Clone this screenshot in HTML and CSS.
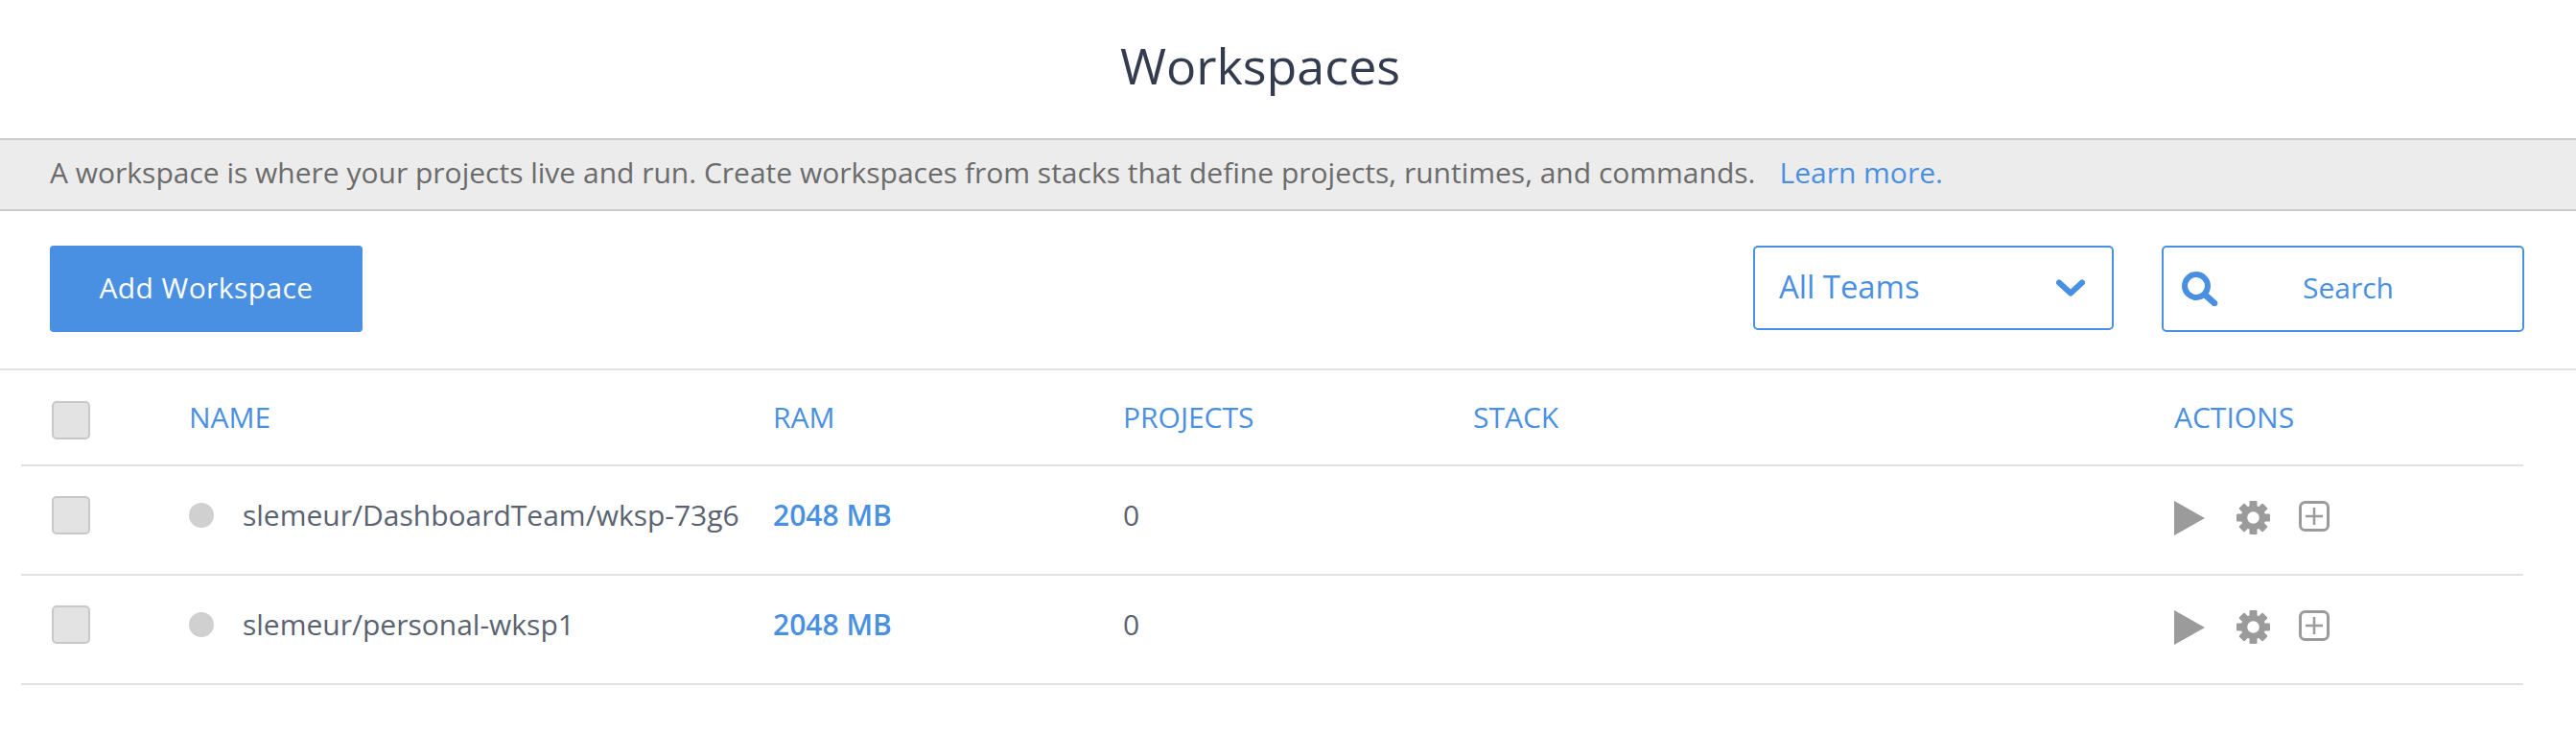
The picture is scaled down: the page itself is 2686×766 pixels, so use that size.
FILE: index.html
```html
<!DOCTYPE html>
<html lang="en">
<head>
    <meta charset="UTF-8">
    <title>Workspaces</title>
    <link rel="stylesheet" href="styles.css">
</head>
<body>
    <h1 class="page-title">Workspaces</h1>

    <div class="info-bar">
        <span>A workspace is where your projects live and run. Create workspaces from stacks that define projects, runtimes, and commands.</span>
        <a class="learn-more" href="#">Learn more.</a>
    </div>

    <div class="toolbar">
        <button class="add-btn">Add Workspace</button>
        <div class="toolbar-right">
            <div class="team-select">
                <span>All Teams</span>
                <svg class="chevron" width="30" height="18" viewBox="0 0 30 18"><path d="M3 3.5 15 14.5 27 3.5" fill="none" stroke="#4a90e2" stroke-width="6" stroke-linecap="round" stroke-linejoin="round"/></svg>
            </div>
            <div class="search-box">
                <svg class="search-icon" width="38" height="36" viewBox="0 0 38 36"><circle cx="15" cy="15" r="12" fill="none" stroke="#4a90e2" stroke-width="6"/><path d="M24 24 34 33" stroke="#4a90e2" stroke-width="6.5" stroke-linecap="round"/></svg>
                <span>Search</span>
            </div>
        </div>
    </div>

    <div class="list">
        <div class="row head-row">
            <div class="checkbox"></div>
            <div>NAME</div>
            <div>RAM</div>
            <div>PROJECTS</div>
            <div>STACK</div>
            <div>ACTIONS</div>
        </div>

        <div class="row item-row">
            <div class="checkbox"></div>
            <div class="name"><span class="dot"></span>slemeur/DashboardTeam/wksp-73g6</div>
            <div class="ram">2048 MB</div>
            <div>0</div>
            <div></div>
            <div class="actions">
                <svg width="32" height="36" viewBox="0 0 32 36"><path d="M0 0 32 18 0 36Z" fill="#9b9b9b"/></svg>
                <svg width="35" height="35" viewBox="0 0 35 35"><use href="#cog"/></svg>
                <svg class="add-icon" width="32" height="32" viewBox="0 0 32 32"><rect x="1.5" y="1.5" width="29" height="29" rx="5" fill="none" stroke="#9b9b9b" stroke-width="3"/><path d="M16 7V25M7 16H25" stroke="#9b9b9b" stroke-width="2.5"/></svg>
            </div>
        </div>

        <div class="row item-row">
            <div class="checkbox"></div>
            <div class="name"><span class="dot"></span>slemeur/personal-wksp1</div>
            <div class="ram">2048 MB</div>
            <div>0</div>
            <div></div>
            <div class="actions">
                <svg width="32" height="36" viewBox="0 0 32 36"><path d="M0 0 32 18 0 36Z" fill="#9b9b9b"/></svg>
                <svg width="35" height="35" viewBox="0 0 35 35"><use href="#cog"/></svg>
                <svg class="add-icon" width="32" height="32" viewBox="0 0 32 32"><rect x="1.5" y="1.5" width="29" height="29" rx="5" fill="none" stroke="#9b9b9b" stroke-width="3"/><path d="M16 7V25M7 16H25" stroke="#9b9b9b" stroke-width="2.5"/></svg>
            </div>
        </div>
    </div>

    <!-- shared gear icon -->
    <svg class="defs" width="0" height="0">
        <defs>
            <g id="cog" fill="#9b9b9b">
                <circle cx="17.5" cy="17.5" r="9.5" fill="none" stroke="#9b9b9b" stroke-width="6.5"/>
                <rect x="13.5" y="0" width="8" height="8" rx="1"/>
                <rect x="13.5" y="0" width="8" height="8" rx="1" transform="rotate(45 17.5 17.5)"/>
                <rect x="13.5" y="0" width="8" height="8" rx="1" transform="rotate(90 17.5 17.5)"/>
                <rect x="13.5" y="0" width="8" height="8" rx="1" transform="rotate(135 17.5 17.5)"/>
                <rect x="13.5" y="0" width="8" height="8" rx="1" transform="rotate(180 17.5 17.5)"/>
                <rect x="13.5" y="0" width="8" height="8" rx="1" transform="rotate(225 17.5 17.5)"/>
                <rect x="13.5" y="0" width="8" height="8" rx="1" transform="rotate(270 17.5 17.5)"/>
                <rect x="13.5" y="0" width="8" height="8" rx="1" transform="rotate(315 17.5 17.5)"/>
            </g>
        </defs>
    </svg>
</body>
</html>
```

FILE: styles.css
```css
body {
    font-family: "Open Sans", sans-serif;
    background-color: #fff;
    margin: 0;
    padding: 0;
    overflow: hidden;
}
.page-title {
    height: 144px;
    box-sizing: border-box;
    margin: 0;
    padding: 0 58px 10px 0;
    display: flex;
    align-items: center;
    justify-content: center;
    font-size: 52px;
    font-weight: 400;
    color: #333c4f;
}
.info-bar {
    height: 76px;
    box-sizing: border-box;
    display: flex;
    align-items: center;
    padding: 0 0 6px 52px;
    background-color: #ececec;
    border-top: 2px solid #ccc;
    border-bottom: 2px solid #ccc;
    font-size: 30px;
    color: #6b6b6b;
}
.learn-more {
    margin-left: 25px;
    color: #4a90e2;
    text-decoration: none;
}
.toolbar {
    height: 166px;
    box-sizing: border-box;
    display: flex;
    justify-content: space-between;
    padding: 36px 54px 0 52px;
    border-bottom: 2px solid #e1e1e1;
}
.add-btn {
    width: 326px;
    height: 90px;
    padding: 0 0 4px;
    border: 0;
    border-radius: 4px;
    background-color: #4a90e2;
    color: #fff;
    font-family: inherit;
    font-size: 30px;
    font-weight: 500;
    letter-spacing: 0.4px;
}
.toolbar-right {
    display: flex;
    gap: 50px;
    align-items: flex-start;
}
.team-select, .search-box {
    box-sizing: border-box;
    display: flex;
    align-items: center;
    border: 2px solid #4a90e2;
    border-radius: 5px;
    color: #4a90e2;
}
.team-select {
    width: 376px;
    height: 88px;
    justify-content: space-between;
    padding: 0 28px 0 25px;
    font-size: 32.8px;
}
.team-select span, .search-box span {
    margin-bottom: 4px;
}
.search-box {
    width: 378px;
    height: 90px;
    padding-left: 19px;
    font-size: 30px;
}
.search-box span {
    margin-left: 88px;
}
.list {
    margin: 0 55px 0 22px;
}
.row {
    display: grid;
    grid-template-columns: 143px 609px 365px 365px 731px 1fr;
    align-items: center;
    box-sizing: border-box;
    padding-left: 32px;
    border-bottom: 2px solid #e1e1e1;
    font-size: 30px;
}
.head-row {
    height: 100px;
    color: #4a90e2;
}
.head-row > div:not(.checkbox) {
    margin-bottom: 2px;
}
.head-row .checkbox {
    margin-top: 6px;
}
.item-row {
    height: 114px;
    padding-bottom: 10px;
    color: #5a6270;
}
.item-row > div:not(.checkbox):not(.actions) {
    margin-bottom: 2px;
}
.checkbox {
    width: 40px;
    height: 40px;
    box-sizing: border-box;
    background-color: #e3e3e3;
    border: 2px solid #c8c8c8;
    border-radius: 5px;
}
.name {
    display: flex;
    align-items: center;
    white-space: nowrap;
}
.dot {
    width: 26px;
    height: 26px;
    margin: 2px 30px 0 0;
    border-radius: 50%;
    background-color: #d0d0d0;
}
.ram {
    color: #4a90e2;
    font-weight: 600;
}
.actions {
    display: flex;
    align-items: flex-start;
    gap: 33px;
    margin-top: 5px;
}
.add-icon {
    margin-left: -3px;
}
.defs {
    position: absolute;
}
```
